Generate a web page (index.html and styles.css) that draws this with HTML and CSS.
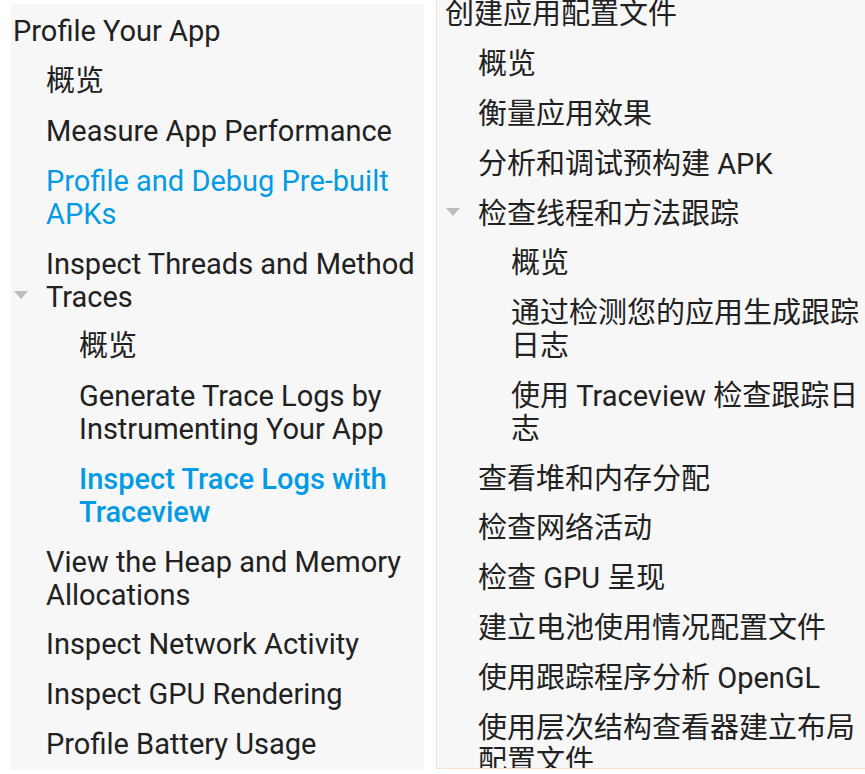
FILE: index.html
```html
<!DOCTYPE html>
<html lang="zh">
<head>
<meta charset="utf-8">
<title>Profile Your App</title>
<link rel="stylesheet" href="styles.css">
</head>
<body>
<div class="page">
  <nav class="panel panel-en">
    <ul class="tree">
      <li class="item lv0">Profile Your App</li>
      <li class="item lv1">概览</li>
      <li class="item lv1">Measure App Performance</li>
      <li class="item lv1 active">Profile and Debug Pre-built APKs</li>
      <li class="item lv1 toggle"><span class="caret"></span><span class="label">Inspect Threads and Method Traces</span></li>
      <li class="item lv2">概览</li>
      <li class="item lv2">Generate Trace Logs by Instrumenting Your App</li>
      <li class="item lv2 active strong">Inspect Trace Logs with Traceview</li>
      <li class="item lv1">View the Heap and Memory Allocations</li>
      <li class="item lv1">Inspect Network Activity</li>
      <li class="item lv1">Inspect GPU Rendering</li>
      <li class="item lv1">Profile Battery Usage</li>
    </ul>
  </nav>
  <nav class="panel panel-zh">
    <ul class="tree tree-zh">
      <li class="item lv0">创建应用配置文件</li>
      <li class="item lv1">概览</li>
      <li class="item lv1">衡量应用效果</li>
      <li class="item lv1">分析和调试预构建 APK</li>
      <li class="item lv1 toggle"><span class="caret"></span><span class="label">检查线程和方法跟踪</span></li>
      <li class="item lv2">概览</li>
      <li class="item lv2">通过检测您的应用生成跟踪日志</li>
      <li class="item lv2">使用 Traceview 检查跟踪日志</li>
      <li class="item lv1">查看堆和内存分配</li>
      <li class="item lv1">检查网络活动</li>
      <li class="item lv1">检查 GPU 呈现</li>
      <li class="item lv1">建立电池使用情况配置文件</li>
      <li class="item lv1">使用跟踪程序分析 OpenGL</li>
      <li class="item lv1">使用层次结构查看器建立布局配置文件</li>
    </ul>
  </nav>
</div>
</body>
</html>
```

FILE: styles.css
```css
html, body {
  margin: 0;
  padding: 0;
  background: #ffffff;
  overflow: hidden;
}

body {
  font-family: Roboto, "Noto Sans CJK SC", sans-serif;
  font-size: 29px;
  line-height: 33px;
  color: #212121;
}

.page {
  display: flex;
  align-items: flex-start;
  gap: 12px;
  padding: 4px 0 0 11px;
}

.panel {
  background: #f7f7f7;
  overflow: hidden;
  flex: none;
}

.panel-en {
  width: 413px;
  height: 766px;
  padding: 3px 0 0 2px;
  box-sizing: border-box;
}

.panel-zh {
  width: 429px;
  height: 769px;
  margin-top: -4px;
  padding: 0 0 0 8px;
  box-sizing: border-box;
  border-left: 1px solid #fbe0d0;
  border-bottom: 1px solid #fbe0d0;
}

.tree {
  list-style: none;
  margin: 0;
  padding: 0;
}

.tree-zh {
  margin-top: -10px;
}

.item {
  padding: 8.4px 0;
}

.lv1 { padding-left: 33px; }
.lv2 { padding-left: 66px; }

.active {
  color: #039be5;
}

.strong {
  font-weight: 500;
}

.toggle {
  display: flex;
  align-items: flex-end;
}

.caret {
  flex: none;
  width: 33px;
  height: 33px;
  margin-left: -33px;
  display: flex;
  align-items: center;
  padding-left: 1px;
  box-sizing: border-box;
}

.caret::before {
  content: "";
  display: block;
  margin-top: -4px;
  border-left: 7.5px solid transparent;
  border-right: 7.5px solid transparent;
  border-top: 8px solid #bdbdbd;
}
```
